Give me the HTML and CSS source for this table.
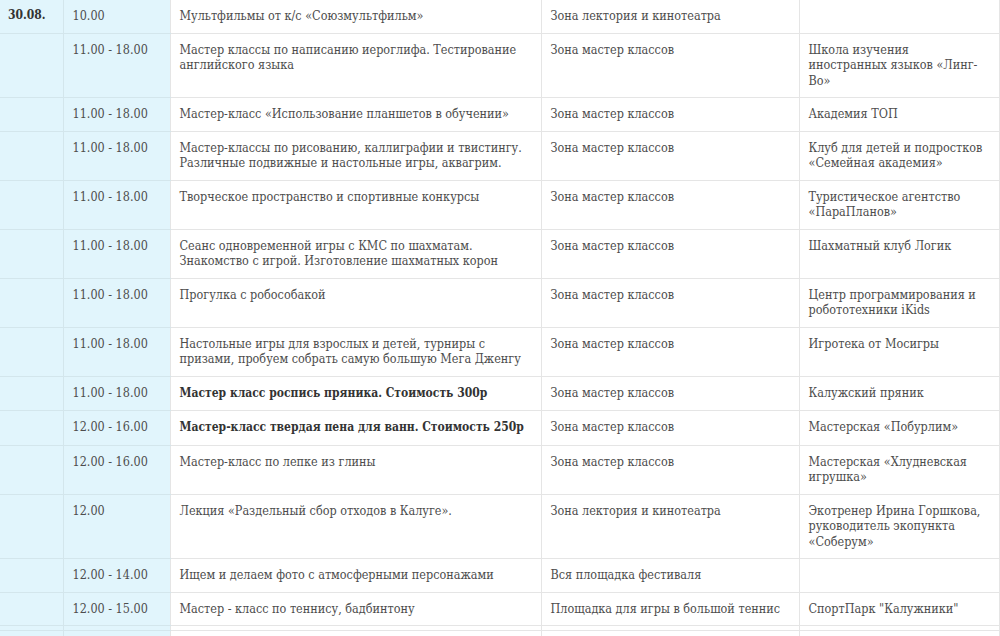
FILE: index.html
```html
<!DOCTYPE html>
<html lang="ru">
<head>
<meta charset="utf-8">
<title>Программа</title>
<link rel="stylesheet" href="styles.css">
</head>
<body>
<table class="schedule">
<colgroup>
<col class="c-date"><col class="c-time"><col class="c-event"><col class="c-zone"><col class="c-org">
</colgroup>
<tbody>
<tr><td class="date">30.08.</td><td class="time">10.00</td><td>Мультфильмы от к/с «Союзмультфильм»</td><td>Зона лектория и кинотеатра</td><td></td></tr>
<tr><td class="date"></td><td class="time">11.00 - 18.00</td><td>Мастер классы по написанию иероглифа. Тестирование английского языка</td><td>Зона мастер классов</td><td>Школа изучения иностранных языков «Линг-Во»</td></tr>
<tr><td class="date"></td><td class="time">11.00 - 18.00</td><td>Мастер-класс «Использование планшетов в обучении»</td><td>Зона мастер классов</td><td>Академия ТОП</td></tr>
<tr><td class="date"></td><td class="time">11.00 - 18.00</td><td>Мастер-классы по рисованию, каллиграфии и твистингу. Различные подвижные и настольные игры, аквагрим.</td><td>Зона мастер классов</td><td>Клуб для детей и подростков «Семейная академия»</td></tr>
<tr><td class="date"></td><td class="time">11.00 - 18.00</td><td>Творческое пространство и спортивные конкурсы</td><td>Зона мастер классов</td><td>Туристическое агентство «ПараПланов»</td></tr>
<tr><td class="date"></td><td class="time">11.00 - 18.00</td><td>Сеанс одновременной игры с КМС по шахматам. Знакомство с игрой. Изготовление шахматных корон</td><td>Зона мастер классов</td><td>Шахматный клуб Логик</td></tr>
<tr><td class="date"></td><td class="time">11.00 - 18.00</td><td>Прогулка с робособакой</td><td>Зона мастер классов</td><td>Центр программирования и робототехники iKids</td></tr>
<tr><td class="date"></td><td class="time">11.00 - 18.00</td><td>Настольные игры для взрослых и детей, турниры с призами, пробуем собрать самую большую Мега Дженгу</td><td>Зона мастер классов</td><td>Игротека от Мосигры</td></tr>
<tr><td class="date"></td><td class="time">11.00 - 18.00</td><td><strong>Мастер класс роспись пряника. Стоимость 300р</strong></td><td>Зона мастер классов</td><td>Калужский пряник</td></tr>
<tr><td class="date"></td><td class="time">12.00 - 16.00</td><td><strong>Мастер-класс твердая пена для ванн. Стоимость 250р</strong></td><td>Зона мастер классов</td><td>Мастерская «Побурлим»</td></tr>
<tr><td class="date"></td><td class="time">12.00 - 16.00</td><td>Мастер-класс по лепке из глины</td><td>Зона мастер классов</td><td>Мастерская «Хлудневская игрушка»</td></tr>
<tr><td class="date"></td><td class="time">12.00</td><td>Лекция «Раздельный сбор отходов в Калуге».</td><td>Зона лектория и кинотеатра</td><td>Экотренер Ирина Горшкова, руководитель экопункта «Соберум»</td></tr>
<tr><td class="date"></td><td class="time">12.00 - 14.00</td><td>Ищем и делаем фото с атмосферными персонажами</td><td>Вся площадка фестиваля</td><td></td></tr>
<tr><td class="date"></td><td class="time">12.00 - 15.00</td><td>Мастер - класс по теннису, бадбинтону</td><td>Площадка для игры в большой теннис</td><td>СпортПарк "Калужники"</td></tr>
<tr class="thin"><td class="date"></td><td class="time"></td><td></td><td></td><td></td></tr>
<tr class="tail"><td class="date"></td><td class="time"></td><td></td><td></td><td></td></tr>
</tbody>
</table>
</body>
</html>
```
FILE: styles.css
```css
html, body {
  margin: 0;
  padding: 0;
  background: #ffffff;
}
body {
  font-family: "DejaVu Serif Condensed", "DejaVu Serif", "Liberation Serif", serif;
  font-size: 12.5px;
  line-height: 15.5px;
  color: #4d4d4d;
  overflow: hidden;
}
.schedule {
  border-collapse: collapse;
  table-layout: fixed;
  width: 999px;
  margin-top: 0;
}
.schedule tr:first-child td {
  border-top: none;
}
.c-date { width: 63px; }
.c-time { width: 107px; }
.c-event { width: 371px; }
.c-zone { width: 258px; }
.c-org { width: 200px; }
.schedule td {
  border: 1px solid #e5e5e5;
  padding: 8px 9px 9px 9px;
  vertical-align: top;
  text-align: left;
}
.schedule td:first-child {
  border-left: none;
}
.schedule td.date,
.schedule td.time {
  background: #e1f5fc;
  border-color: #d3e6ec;
}
.schedule td.time {
  border-right-color: #e5e5e5;
}
.schedule td.date {
  padding-left: 8px;
  padding-right: 4px;
  font-size: 12px;
  font-weight: bold;
  color: #333333;
}
.schedule strong {
  font-size: 12px;
  font-weight: bold;
  color: #333333;
}
.schedule tr.thin td {
  padding: 0;
  height: 4px;
  line-height: 4px;
}
.schedule tr.tail td {
  height: 16px;
}
```
